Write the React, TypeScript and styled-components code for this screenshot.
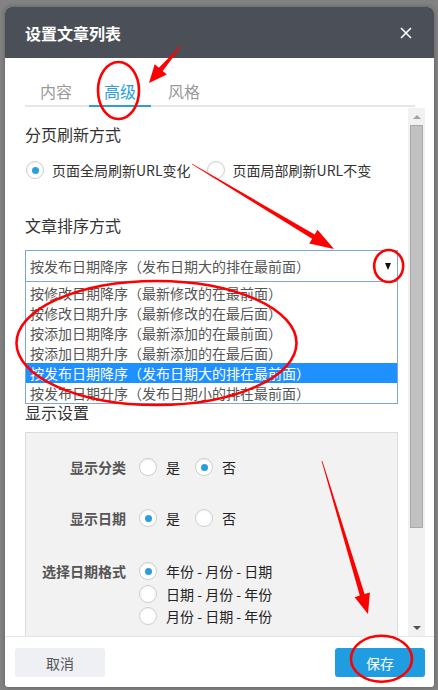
import React from "react";
import styled, { createGlobalStyle } from "styled-components";

const Global = createGlobalStyle`
  html, body { margin: 0; padding: 0; background: #828282; }
  body {
    font-family: "Noto Sans CJK SC", "Noto Sans", sans-serif;
    width: 438px; height: 690px; overflow: hidden;
  }
  * { box-sizing: border-box; }
`;

const Page = styled.div`
  position: relative;
  width: 438px;
  height: 690px;
  padding: 7px 0 0 5px;
  background: #828282;
`;

const Dialog = styled.div`
  width: 429px;
  height: 680px;
  background: #fff;
  border-radius: 6px 6px 3px 3px;
  overflow: hidden;
  display: flex;
  flex-direction: column;
  box-shadow: 0 0 4px rgba(0, 0, 0, 0.3);
`;

const Header = styled.div`
  flex: none;
  height: 51px;
  background: #4b5058;
  display: flex;
  align-items: center;
  justify-content: space-between;
  padding: 0 22px 0 20px;
`;

const Title = styled.h1`
  margin: 0;
  color: #fff;
  font-size: 16px;
  font-weight: bold;
  line-height: 22px;
`;

const Close = styled.svg`
  width: 12px;
  height: 12px;
  display: block;
`;

const TabBar = styled.div`
  flex: none;
  display: flex;
  margin: 22px 19px 1px 20px;
  border-bottom: 2px solid #e6e6e6;
`;

const Tab = styled.div<{ $active?: boolean }>`
  padding: 0 15px 3px;
  margin-right: 2px;
  margin-bottom: -2px;
  font-size: 16px;
  line-height: 22px;
  color: ${(p) => (p.$active ? "#2a9fdc" : "#9a9a9a")};
  border-bottom: 2px solid ${(p) => (p.$active ? "#2a9fdc" : "transparent")};
`;

const ScrollRow = styled.div`
  flex: none;
  height: 528px;
  display: flex;
  padding-right: 9px;
`;

const Content = styled.div`
  flex: 1;
  overflow: hidden;
  padding: 15px 10px 0 20px;
`;

const Scrollbar = styled.div`
  width: 17px;
  flex: none;
  background: #f1f1f1;
  display: flex;
  flex-direction: column;
`;

const ScrollBtn = styled.div<{ $down?: boolean }>`
  height: 17px;
  flex: none;
  display: flex;
  align-items: center;
  justify-content: center;
  &::after {
    content: "";
    width: 0;
    height: 0;
    border-left: 4px solid transparent;
    border-right: 4px solid transparent;
    ${(p) =>
      p.$down
        ? "border-top: 4px solid #505050;"
        : "border-bottom: 4px solid #a3a3a3;"}
  }
`;

const Thumb = styled.div`
  height: 403px;
  margin: 0 2px;
  background: #c1c1c1;
  border: 1px solid #a9a9a9;
`;

const Track = styled.div`
  flex: 1;
`;

const SectionTitle = styled.h2<{ $gap?: number }>`
  margin: ${(p) => p.$gap ?? 0}px 0 0;
  font-size: 16px;
  font-weight: normal;
  line-height: 22px;
  color: #333;
`;

const RadioRow = styled.div`
  display: flex;
  align-items: center;
  height: 24px;
  margin-top: 13px;
  padding-left: 1px;
`;

const RadioItem = styled.label<{ $gap?: number; $space?: number }>`
  display: flex;
  align-items: center;
  gap: ${(p) => p.$gap ?? 8}px;
  margin-right: ${(p) => p.$space ?? 16}px;
  font-size: 14px;
  line-height: 22px;
  color: ${(p) => (p.$gap === 9 ? "#222" : "#333")};
  white-space: nowrap;
`;

const Circle = styled.span<{ $checked?: boolean }>`
  width: 18px;
  height: 18px;
  flex: none;
  border-radius: 50%;
  border: 1px solid #cfcfcf;
  background: #fff;
  box-shadow: inset 0 1px 2px rgba(0, 0, 0, 0.06);
  display: flex;
  align-items: center;
  justify-content: center;
  &::after {
    content: "";
    width: 7px;
    height: 7px;
    border-radius: 50%;
    background: ${(p) => (p.$checked ? "#2a9fe0" : "transparent")};
  }
`;

const SelectWrap = styled.div`
  position: relative;
  margin-top: 14px;
  height: 32px;
`;

const SelectBox = styled.div`
  height: 32px;
  border: 1px solid #7ea6de;
  display: flex;
  align-items: center;
  justify-content: space-between;
  padding: 0 6px 0 4px;
  font-size: 14px;
  color: #555;
  background: #fff;
`;

const Caret = styled.span`
  width: 0;
  height: 0;
  border-left: 3.5px solid transparent;
  border-right: 3.5px solid transparent;
  border-top: 7px solid #111;
`;

const DropList = styled.div`
  position: absolute;
  top: 100%;
  left: 0;
  right: 0;
  z-index: 2;
  background: #fff;
  border: 1px solid #7ea6de;
  border-top: none;
  padding-top: 1px;
`;

const Option = styled.div<{ $selected?: boolean }>`
  height: 20px;
  line-height: 20px;
  padding-left: 4px;
  font-size: 14px;
  color: ${(p) => (p.$selected ? "#fff" : "#555")};
  background: ${(p) => (p.$selected ? "#1e90ff" : "transparent")};
  white-space: nowrap;
`;

const SettingsBox = styled.div`
  margin-top: 9px;
  background: #f2f2f2;
  border: 1px solid #dcdcdc;
  padding: 23px 0 30px;
`;

const SettingRow = styled.div<{ $gap?: number }>`
  display: grid;
  grid-template-columns: 100px 1fr;
  column-gap: 13px;
  margin-top: ${(p) => p.$gap ?? 0}px;
`;

const SettingLabel = styled.div`
  text-align: right;
  font-size: 14px;
  font-weight: bold;
  line-height: 22px;
  color: #555;
`;

const Choices = styled.div<{ $vertical?: boolean }>`
  display: flex;
  flex-direction: ${(p) => (p.$vertical ? "column" : "row")};
  align-items: flex-start;
  gap: ${(p) => (p.$vertical ? "0.5px" : "0")};
`;

const Footer = styled.div`
  flex: 1;
  border-top: 1px solid #e6e6e6;
  display: flex;
  justify-content: space-between;
  align-items: flex-start;
  padding: 11px 9px 0 10px;
`;

const Button = styled.button<{ $primary?: boolean }>`
  width: 90px;
  height: 29px;
  border: none;
  border-radius: 3px;
  font-family: inherit;
  font-size: 14px;
  color: ${(p) => (p.$primary ? "#fff" : "#555")};
  background: ${(p) => (p.$primary ? "#1f9de0" : "#eef0f3")};
`;

const Overlay = styled.svg`
  position: absolute;
  left: 0;
  top: 0;
  width: 438px;
  height: 690px;
  pointer-events: none;
  z-index: 10;
`;

function arrowPoints(
  x1: number, y1: number, x2: number, y2: number,
  hl: number, hw: number, w1: number, w2: number
) {
  const dx = x2 - x1, dy = y2 - y1;
  const L = Math.hypot(dx, dy);
  const ux = dx / L, uy = dy / L;
  const nx = -uy, ny = ux;
  const bx = x2 - ux * hl, by = y2 - uy * hl;
  const p = (x: number, y: number) => `${x.toFixed(1)},${y.toFixed(1)}`;
  return [
    p(x1 + (nx * w1) / 2, y1 + (ny * w1) / 2),
    p(bx + (nx * w2) / 2, by + (ny * w2) / 2),
    p(bx + nx * hw, by + ny * hw),
    p(x2, y2),
    p(bx - nx * hw, by - ny * hw),
    p(bx - (nx * w2) / 2, by - (ny * w2) / 2),
    p(x1 - (nx * w1) / 2, y1 - (ny * w1) / 2),
  ].join(" ");
}

const options = [
  "按修改日期降序（最新修改的在最前面）",
  "按修改日期升序（最新修改的在最后面）",
  "按添加日期降序（最新添加的在最前面）",
  "按添加日期升序（最新添加的在最后面）",
  "按发布日期降序（发布日期大的排在最前面）",
  "按发布日期升序（发布日期小的排在最前面）",
];

function Radio({ label, checked, box }: { label: string; checked?: boolean; box?: boolean }) {
  return (
    <RadioItem $gap={box ? 9 : 8} $space={box ? 15 : 16}>
      <Circle $checked={checked} />
      {label}
    </RadioItem>
  );
}

export default function App() {
  return (
    <Page>
      <Global />
      <Dialog>
        <Header>
          <Title>设置文章列表</Title>
          <Close viewBox="0 0 12 12">
            <path d="M1 1 L11 11 M11 1 L1 11" stroke="#fff" strokeWidth="1.6" fill="none" />
          </Close>
        </Header>
        <TabBar>
          <Tab>内容</Tab>
          <Tab $active>高级</Tab>
          <Tab>风格</Tab>
        </TabBar>
        <ScrollRow>
          <Content>
            <SectionTitle>分页刷新方式</SectionTitle>
            <RadioRow>
              <Radio label="页面全局刷新URL变化" checked />
              <Radio label="页面局部刷新URL不变" />
            </RadioRow>
            <SectionTitle $gap={32}>文章排序方式</SectionTitle>
            <SelectWrap>
              <SelectBox>
                <span>按发布日期降序（发布日期大的排在最前面）</span>
                <Caret />
              </SelectBox>
              <DropList>
                {options.map((o, i) => (
                  <Option key={o} $selected={i === 4}>
                    {o}
                  </Option>
                ))}
              </DropList>
            </SelectWrap>
            <SectionTitle $gap={119}>显示设置</SectionTitle>
            <SettingsBox>
              <SettingRow>
                <SettingLabel>显示分类</SettingLabel>
                <Choices>
                  <Radio box label="是" />
                  <Radio box label="否" checked />
                </Choices>
              </SettingRow>
              <SettingRow $gap={29}>
                <SettingLabel>显示日期</SettingLabel>
                <Choices>
                  <Radio box label="是" checked />
                  <Radio box label="否" />
                </Choices>
              </SettingRow>
              <SettingRow $gap={31}>
                <SettingLabel>选择日期格式</SettingLabel>
                <Choices $vertical>
                  <Radio box label="年份 - 月份 - 日期" checked />
                  <Radio box label="日期 - 月份 - 年份" />
                  <Radio box label="月份 - 日期 - 年份" />
                </Choices>
              </SettingRow>
            </SettingsBox>
          </Content>
          <Scrollbar>
            <ScrollBtn />
            <Thumb />
            <Track />
            <ScrollBtn $down />
          </Scrollbar>
        </ScrollRow>
        <Footer>
          <Button>取消</Button>
          <Button $primary>保存</Button>
        </Footer>
      </Dialog>
      <Overlay viewBox="0 0 438 690">
        <g fill="#ff0000">
          <polygon points={arrowPoints(181, 46, 149, 83, 18, 8, 1, 5)} />
          <polygon points={arrowPoints(192, 164, 334, 249, 24, 8, 0.8, 5)} />
          <polygon points={arrowPoints(322, 461, 368, 614, 20, 8, 0.8, 5)} />
        </g>
        <g fill="none" stroke="#ff0000" strokeWidth="2.6">
          <ellipse cx="118.5" cy="90.5" rx="20.5" ry="28.5" />
          <ellipse cx="388.7" cy="266" rx="14.5" ry="16" />
          <ellipse cx="156.5" cy="343" rx="140" ry="62" />
          <ellipse cx="381.5" cy="658.7" rx="30.5" ry="23" />
        </g>
      </Overlay>
    </Page>
  );
}
